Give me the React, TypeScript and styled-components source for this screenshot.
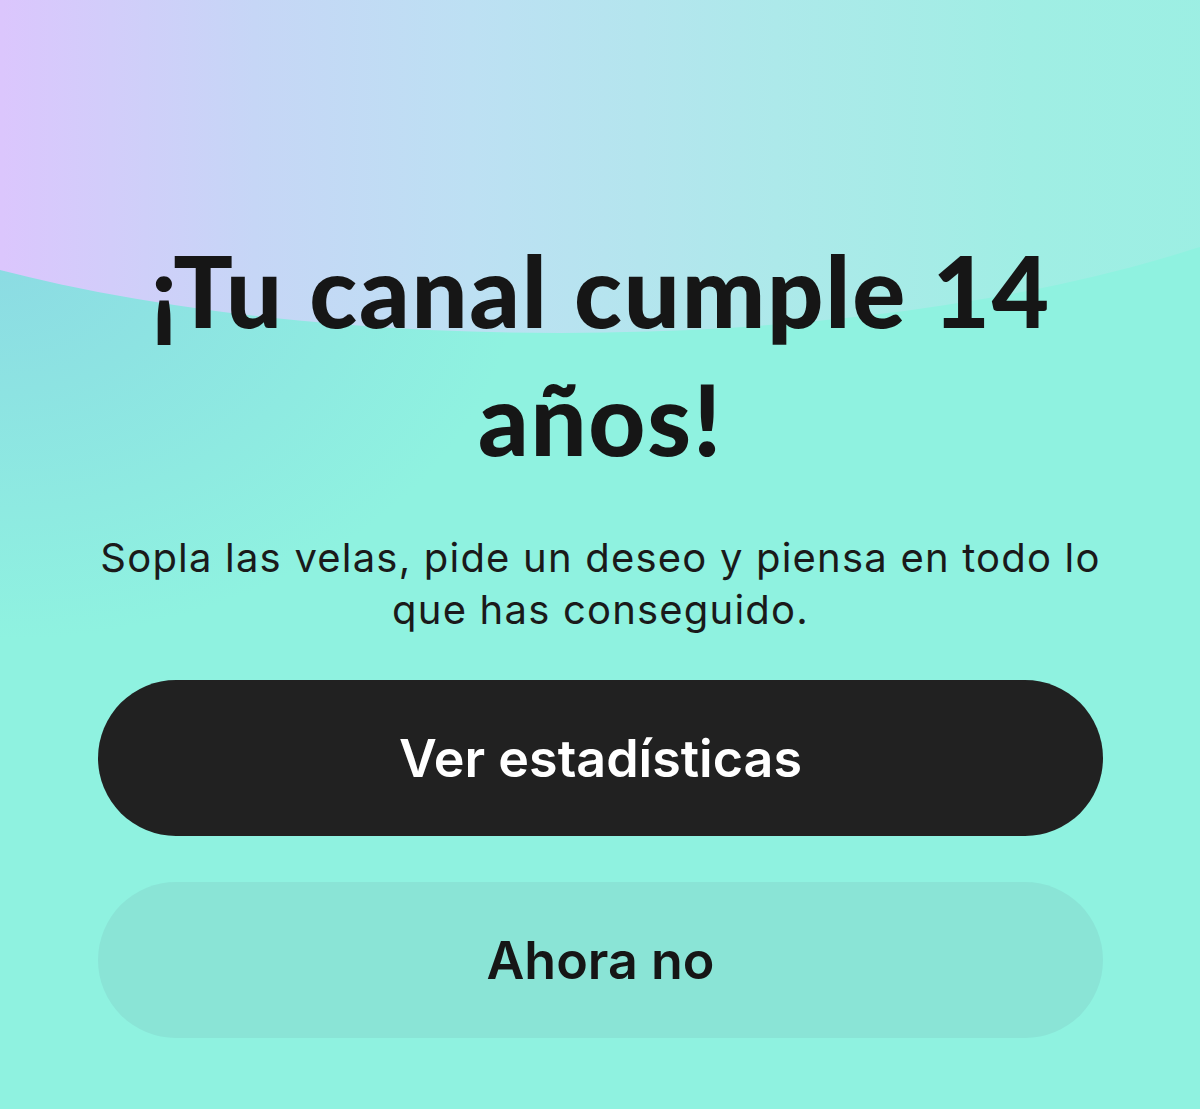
import React from "react";
import styled, { createGlobalStyle } from "styled-components";

const Global = createGlobalStyle`
  html, body {
    margin: 0;
    padding: 0;
    height: 100%;
  }
  body {
    background: #8ff2e0;
    overflow: hidden;
  }
  #root {
    min-height: 100%;
  }
`;

const Screen = styled.main`
  position: relative;
  width: 1200px;
  height: 1109px;
  overflow: hidden;
  background:
    radial-gradient(ellipse 520px 380px at 0px 260px, #8cdbe3 0%, rgba(143, 242, 224, 0) 100%),
    #8ff2e0;
  display: flex;
  flex-direction: column;
  align-items: center;
  padding: 0 97px 0 98px;
  box-sizing: border-box;
  color: #161616;

  &::before {
    content: "";
    position: absolute;
    left: -340px;
    top: -247px;
    width: 1800px;
    height: 580px;
    border-radius: 50%;
    background: linear-gradient(
      90deg,
      #e6c3ff 0%,
      #dbc6fd 19%,
      #c6d6f6 33%,
      #bde0f3 45%,
      #ade9ea 62%,
      #a0eee4 76%,
      #97f0e2 100%
    );
    z-index: 0;
  }
`;

const Content = styled.div`
  position: relative;
  z-index: 1;
  width: 100%;
  display: flex;
  flex-direction: column;
  align-items: center;
`;

const Title = styled.h1`
  margin: 226px 0 0;
  font-family: "Lato", "Open Sans", sans-serif;
  font-weight: 900;
  font-size: 99px;
  line-height: 128px;
  letter-spacing: 1.8px;
  text-align: center;
  color: #161616;
`;

const Subtitle = styled.p`
  margin: 50px 0 0;
  font-family: "Inter", "Roboto", sans-serif;
  font-weight: 400;
  font-size: 40px;
  line-height: 52px;
  letter-spacing: 1.2px;
  text-align: center;
  color: #1a1a1a;
  max-width: 1010px;
`;

const Actions = styled.div`
  width: 100%;
  margin-top: 44px;
  display: flex;
  flex-direction: column;
  gap: 46px;
`;

const PillButton = styled.button<{ $primary?: boolean }>`
  width: 100%;
  height: 156px;
  border: none;
  border-radius: 78px;
  background: ${(p) => (p.$primary ? "#212121" : "#8ae4d6")};
  color: ${(p) => (p.$primary ? "#ffffff" : "#161616")};
  font-family: "Inter", "Roboto", sans-serif;
  font-weight: 600;
  font-size: 52px;
  letter-spacing: 0px;
  display: flex;
  align-items: center;
  justify-content: center;
  cursor: pointer;
`;

export default function App() {
  return (
    <>
      <Global />
      <Screen>
        <Content>
          <Title>
            ¡Tu canal cumple 14
            <br />
            años!
          </Title>
          <Subtitle>
            Sopla las velas, pide un deseo y piensa en todo lo que has conseguido.
          </Subtitle>
          <Actions>
            <PillButton $primary>Ver estadísticas</PillButton>
            <PillButton>Ahora no</PillButton>
          </Actions>
        </Content>
      </Screen>
    </>
  );
}
